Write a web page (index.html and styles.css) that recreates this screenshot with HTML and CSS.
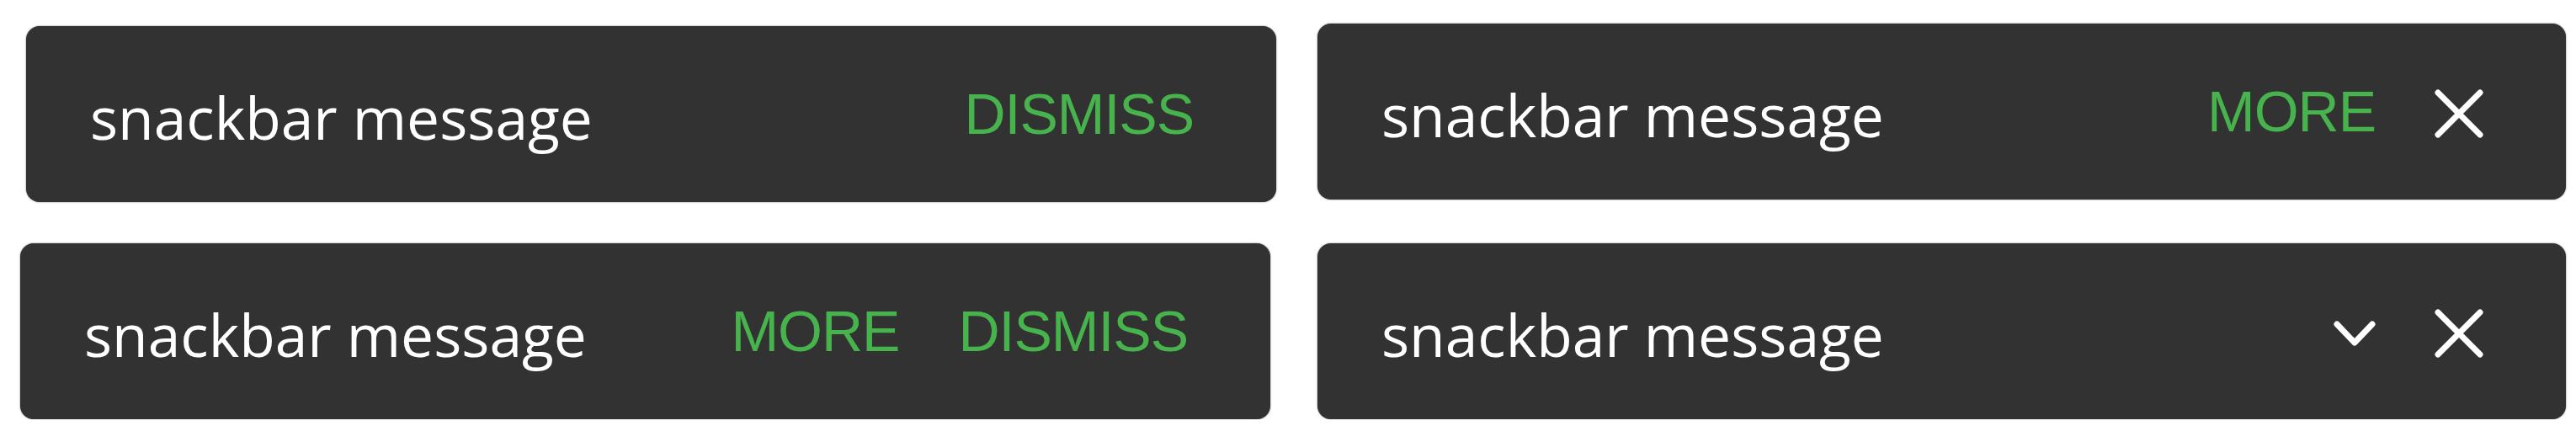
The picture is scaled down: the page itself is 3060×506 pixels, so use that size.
FILE: index.html
```html
<!DOCTYPE html>
<html lang="en">
<head>
  <meta charset="UTF-8">
  <meta name="viewport" content="width=device-width, initial-scale=1.0">
  <title>Snackbars</title>
  <link rel="stylesheet" href="styles.css">
</head>
<body>
  <div class="board">
    <!-- single text action -->
    <div class="snackbar snackbar-a">
      <span class="message">snackbar message</span>
      <div class="actions">
        <button class="action">DISMISS</button>
      </div>
    </div>

    <!-- text action + close icon -->
    <div class="snackbar snackbar-b">
      <span class="message">snackbar message</span>
      <div class="actions">
        <button class="action">MORE</button>
        <button class="icon-btn" aria-label="Close">
          <svg class="icon-close" viewBox="0 0 58 58"><path d="M4 4L54 54M54 4L4 54"/></svg>
        </button>
      </div>
    </div>

    <!-- two text actions -->
    <div class="snackbar snackbar-c">
      <span class="message">snackbar message</span>
      <div class="actions">
        <button class="action">MORE</button>
        <button class="action">DISMISS</button>
      </div>
    </div>

    <!-- expand + close icons -->
    <div class="snackbar snackbar-d">
      <span class="message">snackbar message</span>
      <div class="actions">
        <button class="icon-btn" aria-label="Expand">
          <svg class="icon-expand" viewBox="0 0 50 32"><path d="M4 5L25 27L46 5"/></svg>
        </button>
        <button class="icon-btn" aria-label="Close">
          <svg class="icon-close" viewBox="0 0 58 58"><path d="M4 4L54 54M54 4L4 54"/></svg>
        </button>
      </div>
    </div>
  </div>
</body>
</html>
```

FILE: styles.css
```css
body {
  margin: 0;
  background-color: #fff;
  font-family: "Open Sans", Arial, sans-serif;
}

.board {
  display: grid;
  grid-template-columns: 1492px 1483px;
  grid-template-rows: 212px 209px;
  column-gap: 49px;
  row-gap: 49px;
  padding: 28px 0 0 24px;
}

.snackbar {
  display: flex;
  align-items: center;
  justify-content: space-between;
  width: 1485px;
  height: 209px;
  box-sizing: border-box;
  padding: 0 98px 0 76px;
  background-color: #323232;
  border-radius: 16px;
  box-shadow: 0 0 2px rgba(0, 0, 0, 0.6);
}

.snackbar-a {
  justify-self: end;
  align-self: end;
}

.snackbar-b {
  width: 1483px;
  align-self: start;
}

.snackbar-c {
  justify-self: start;
}

.snackbar-d {
  width: 1483px;
}

.message {
  color: #fff;
  font-size: 69.5px;
  padding-top: 6px;
  white-space: nowrap;
}

.actions {
  display: flex;
  align-items: center;
  gap: 70px;
}

.action {
  background: none;
  border: none;
  padding: 0;
  color: #47b34d;
  font-family: "Liberation Sans", Arial, sans-serif;
  font-size: 68px;
  letter-spacing: -1px;
  line-height: 1.12;
  cursor: pointer;
}

.icon-btn {
  display: flex;
  background: none;
  border: none;
  padding: 0;
  margin-top: 4px;
  cursor: pointer;
}

.icon-btn svg {
  display: block;
  fill: none;
  stroke: #fff;
  stroke-width: 7;
  stroke-linecap: round;
  stroke-linejoin: round;
}

.icon-close {
  width: 58px;
  height: 58px;
}

.icon-expand {
  width: 50px;
  height: 32px;
}
```
